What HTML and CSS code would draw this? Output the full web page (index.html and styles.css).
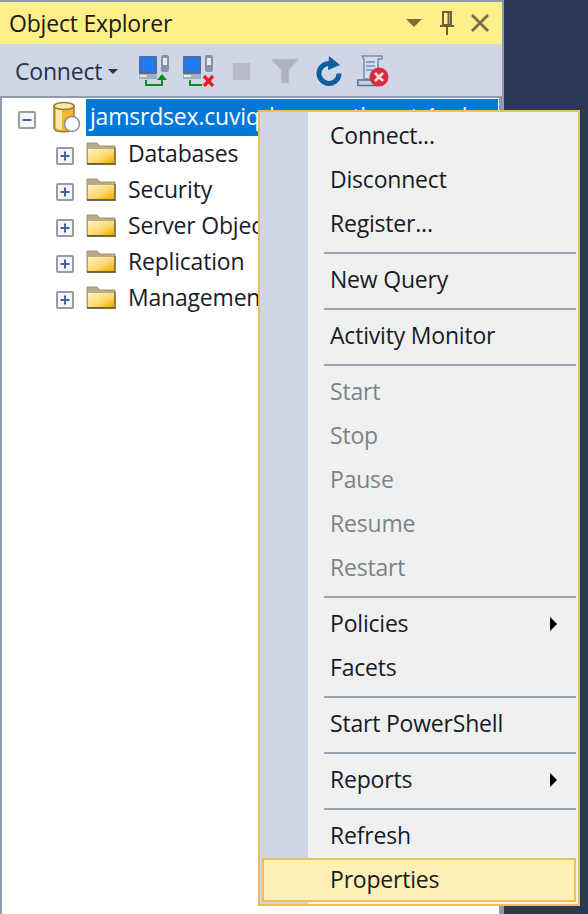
FILE: index.html
```html
<!DOCTYPE html>
<html lang="en">
<head>
<meta charset="utf-8">
<title>Object Explorer</title>
<link rel="stylesheet" href="styles.css">
</head>
<body>
<div class="screen">
  <section class="panel">
    <header class="titlebar">
      <span class="title">Object Explorer</span>
      <span class="title-actions">
        <svg class="ta ta-drop" viewBox="0 0 16 8"><path d="M0 0h16L8 8z" fill="#7a6a3a"/></svg>
        <svg class="ta ta-pin" viewBox="0 0 16 24"><path d="M3 1h10M4 2v12h8V2M9.5 2v12M1 15h14" fill="none" stroke="#6e5f36" stroke-width="2"/><path d="M8 15v9" stroke="#6e5f36" stroke-width="2"/></svg>
        <svg class="ta ta-x" viewBox="0 0 20 18"><path d="M2 1l16 16M18 1L2 17" fill="none" stroke="#7a6d4a" stroke-width="2.8"/></svg>
      </span>
    </header>
    <div class="toolbar">
      <span class="connect">Connect</span>
      <svg class="caret" viewBox="0 0 10 5"><path d="M0 0h10L5 5z" fill="#333"/></svg>
      <svg class="tool tool-net" viewBox="0 0 32 32">
        <rect x="1" y="1" width="18" height="18" rx="1" fill="#4a6ea8"/><rect x="3" y="3" width="14" height="13" fill="#1f7cf2"/>
        <rect x="1" y="19" width="18" height="5" fill="#a3aec2"/><rect x="2" y="20" width="7" height="2" fill="#eef0a8"/>
        <rect x="23" y="0" width="8" height="17" rx="2" fill="#8592a8"/><rect x="25" y="3" width="4" height="7" fill="#e6ebf3"/>
        <path d="M8 25v5h16v-7" fill="none" stroke="#0f8a1f" stroke-width="2"/><path d="M19 25l5-6 5 6z" fill="#0f8a1f"/>
      </svg>
      <svg class="tool tool-net2" viewBox="0 0 32 32">
        <rect x="1" y="1" width="18" height="18" rx="1" fill="#4a6ea8"/><rect x="3" y="3" width="14" height="13" fill="#1f7cf2"/>
        <rect x="1" y="19" width="18" height="5" fill="#a3aec2"/><rect x="2" y="20" width="7" height="2" fill="#eef0a8"/>
        <rect x="23" y="0" width="8" height="17" rx="2" fill="#8592a8"/><rect x="25" y="3" width="4" height="7" fill="#e6ebf3"/>
        <path d="M8 25v5h12" fill="none" stroke="#0f8a1f" stroke-width="2"/><path d="M22 21l9 10M31 21l-9 10" stroke="#ee1c25" stroke-width="3.4"/>
      </svg>
      <span class="tool-stop"></span>
      <svg class="tool tool-filter" viewBox="0 0 30 26"><path d="M1 1h28L19 12v13h-8V12z" fill="#aeb3bd" stroke="#c4c8d0"/></svg>
      <svg class="tool tool-refresh" viewBox="0 0 28 30"><path d="M20 9.5a10 10 0 1 0 4 8" fill="none" stroke="#0f5f9e" stroke-width="5"/><path d="M14 0l11 9-12 5z" fill="#0f5f9e"/></svg>
      <svg class="tool tool-script" viewBox="0 0 32 32">
        <path d="M5 1h20v3h-4v20H7V4z" fill="#d3ddec" stroke="#7e8ca3" stroke-width="1.5"/>
        <path d="M9 7h9M9 11h9M9 15h7" stroke="#6b8fd0" stroke-width="1.6"/>
        <path d="M0.8 25h20v5.5h-20z" fill="#c6d2e4" stroke="#5c6f8c" stroke-width="1.5"/>
        <circle cx="22" cy="22" r="9.5" fill="#d92c3e"/><path d="M18 18l8 8M26 18l-8 8" stroke="#f6dede" stroke-width="2.6"/>
      </svg>
    </div>
    <div class="tree">
      <div class="tree-row root-row">
        <span class="expander"><svg viewBox="0 0 14 14"><path d="M2.5 7h9" stroke="#4d5f9a" stroke-width="2"/></svg></span>
        <svg class="server" viewBox="0 0 30 32">
          <path d="M3 5v22c0 5 20 5 20 0V5z" fill="#f2b92c" stroke="#9c7b3a" stroke-width="1.5"/>
          <path d="M5 7v20c2 2 5 2 6 2V8z" fill="#fce9a8"/>
          <ellipse cx="13" cy="5" rx="10" ry="3.6" fill="#f7e7b0" stroke="#9c7b3a" stroke-width="1.5"/>
          <circle cx="21" cy="23" r="7.5" fill="#fff" stroke="#8f8f8f" stroke-width="1.5"/>
        </svg>
        <span class="label selected">jamsrdsex.cuviqrl.ap-southeast-1.rds</span>
      </div>
      <div class="tree-row child">
        <span class="expander"><svg viewBox="0 0 14 14"><path d="M2.5 7h9M7 2.5v9" stroke="#4d5f9a" stroke-width="2"/></svg></span>
        <svg class="folder" viewBox="0 0 30 24"><use href="#folder-shape"/></svg>
        <span class="label">Databases</span>
      </div>
      <div class="tree-row child">
        <span class="expander"><svg viewBox="0 0 14 14"><path d="M2.5 7h9M7 2.5v9" stroke="#4d5f9a" stroke-width="2"/></svg></span>
        <svg class="folder" viewBox="0 0 30 24"><use href="#folder-shape"/></svg>
        <span class="label">Security</span>
      </div>
      <div class="tree-row child">
        <span class="expander"><svg viewBox="0 0 14 14"><path d="M2.5 7h9M7 2.5v9" stroke="#4d5f9a" stroke-width="2"/></svg></span>
        <svg class="folder" viewBox="0 0 30 24"><use href="#folder-shape"/></svg>
        <span class="label">Server Objects</span>
      </div>
      <div class="tree-row child">
        <span class="expander"><svg viewBox="0 0 14 14"><path d="M2.5 7h9M7 2.5v9" stroke="#4d5f9a" stroke-width="2"/></svg></span>
        <svg class="folder" viewBox="0 0 30 24"><use href="#folder-shape"/></svg>
        <span class="label">Replication</span>
      </div>
      <div class="tree-row child">
        <span class="expander"><svg viewBox="0 0 14 14"><path d="M2.5 7h9M7 2.5v9" stroke="#4d5f9a" stroke-width="2"/></svg></span>
        <svg class="folder" viewBox="0 0 30 24"><use href="#folder-shape"/></svg>
        <span class="label">Management</span>
      </div>
    </div>
  </section>
  <nav class="menu">
    <div class="item">Connect...</div>
    <div class="item">Disconnect</div>
    <div class="item">Register...</div>
    <div class="sep"></div>
    <div class="item">New Query</div>
    <div class="sep"></div>
    <div class="item">Activity Monitor</div>
    <div class="sep"></div>
    <div class="item off">Start</div>
    <div class="item off">Stop</div>
    <div class="item off">Pause</div>
    <div class="item off">Resume</div>
    <div class="item off">Restart</div>
    <div class="sep"></div>
    <div class="item sub">Policies</div>
    <div class="item">Facets</div>
    <div class="sep"></div>
    <div class="item">Start PowerShell</div>
    <div class="sep"></div>
    <div class="item sub">Reports</div>
    <div class="sep"></div>
    <div class="item">Refresh</div>
    <div class="item hot">Properties</div>
  </nav>
</div>
<svg class="defs" aria-hidden="true"><defs>
  <linearGradient id="fg" x1="0" y1="0" x2="1" y2="1"><stop offset="0" stop-color="#fff3c4"/><stop offset="0.6" stop-color="#fdd667"/><stop offset="1" stop-color="#f0a800"/></linearGradient>
  <g id="folder-shape">
    <path d="M1 23V2h10l3 3h15v18z" fill="#b9ab88" stroke="#a3946e"/>
    <rect x="2" y="8" width="26" height="14" fill="url(#fg)"/>
    <path d="M1 23h29" stroke="#5f5330" stroke-width="1.6"/><path d="M29 7v16" stroke="#7a6a40" stroke-width="1.4"/>
  </g>
</defs></svg>
</body>
</html>
```

FILE: styles.css
```css
* { box-sizing: border-box; }
html, body { margin: 0; padding: 0; }
body { font-family: "Open Sans", "Noto Sans", "Liberation Sans", sans-serif; }
.defs { width: 0; height: 0; display: block; overflow: hidden; }
.screen { position: relative; width: 588px; height: 914px; overflow: hidden; background: #293955; }
.panel { width: 504px; height: 914px; display: flex; flex-direction: column; background: #8e99ab; padding: 2px 2px 0 0; }
.titlebar { height: 42px; flex: none; display: flex; align-items: center; justify-content: space-between; background: #fdf08b; padding: 0 12px 0 9px; }
.title { font-size: 23px; color: #1d1a14; letter-spacing: -0.2px; }
.title-actions { display: flex; align-items: center; }
.ta { display: block; }
.ta-drop { width: 16px; height: 8px; }
.ta-pin { width: 16px; height: 24px; margin-left: 17px; }
.ta-x { width: 20px; height: 18px; margin-left: 15px; }
.toolbar { height: 52px; flex: none; display: flex; align-items: center; background: #cfd6e5; padding: 2px 0 0 15px; }
.connect { font-size: 23px; color: #26324a; letter-spacing: -0.2px; }
.caret { width: 10px; height: 5px; margin-left: 6px; }
.tool { display: block; flex: none; }
.tool-net { width: 32px; height: 32px; margin-left: 20px; }
.tool-net2 { width: 32px; height: 32px; margin-left: 12px; }
.tool-stop { width: 17px; height: 17px; background: #b8bcc6; margin-left: 19px; flex: none; }
.tool-filter { width: 30px; height: 26px; margin-left: 20px; }
.tool-refresh { width: 28px; height: 30px; margin-left: 15px; }
.tool-script { width: 32px; height: 32px; margin-left: 14px; }
.tree { flex: 1; background: #fff; border: solid #8e99ab; border-width: 2px 3px 0 2px; padding-top: 1px; }
.tree-row { height: 36px; display: flex; align-items: center; font-size: 23px; color: #1b1b2a; letter-spacing: -0.2px; white-space: nowrap; }
.root-row { padding-left: 16px; }
.child { padding-left: 54px; }
.expander { width: 18px; height: 18px; flex: none; margin-top: 6px; border: 2px solid #9a9da3; border-radius: 2px; background: #f4f5f8; display: flex; }
.expander svg { width: 14px; height: 14px; display: block; }
.server { width: 30px; height: 32px; flex: none; margin-left: 15px; }
.folder { width: 30px; height: 24px; flex: none; margin-left: 12px; }
.label { margin-left: 12px; }
.root-row .label { margin-left: 5px; }
.selected { align-self: flex-start; background: #0078d7; color: #fff; height: 37px; line-height: 35px; width: 412px; padding-left: 4px; overflow: hidden; }
.menu { position: absolute; left: 258px; top: 110px; width: 322px; height: 796px; padding: 2px; border: 2px solid #e9c15f; background: linear-gradient(to right, #cfd6e5 48px, #eff1f1 48px); font-size: 23px; color: #1a1a26; letter-spacing: -0.2px; }
.item { position: relative; height: 44px; line-height: 42px; padding-left: 68px; }
.off { color: #7e8285; }
.sub::after { content: ""; position: absolute; right: 19px; top: 15px; border-left: 7px solid #000; border-top: 7px solid transparent; border-bottom: 7px solid transparent; }
.sep { height: 12px; padding-top: 6px; margin-left: 62px; }
.sep::before { content: ""; display: block; height: 2px; background: #9aa2b2; }
.hot { background: #fff1b5; box-shadow: inset 0 0 0 2px #e9c15f; }
```
